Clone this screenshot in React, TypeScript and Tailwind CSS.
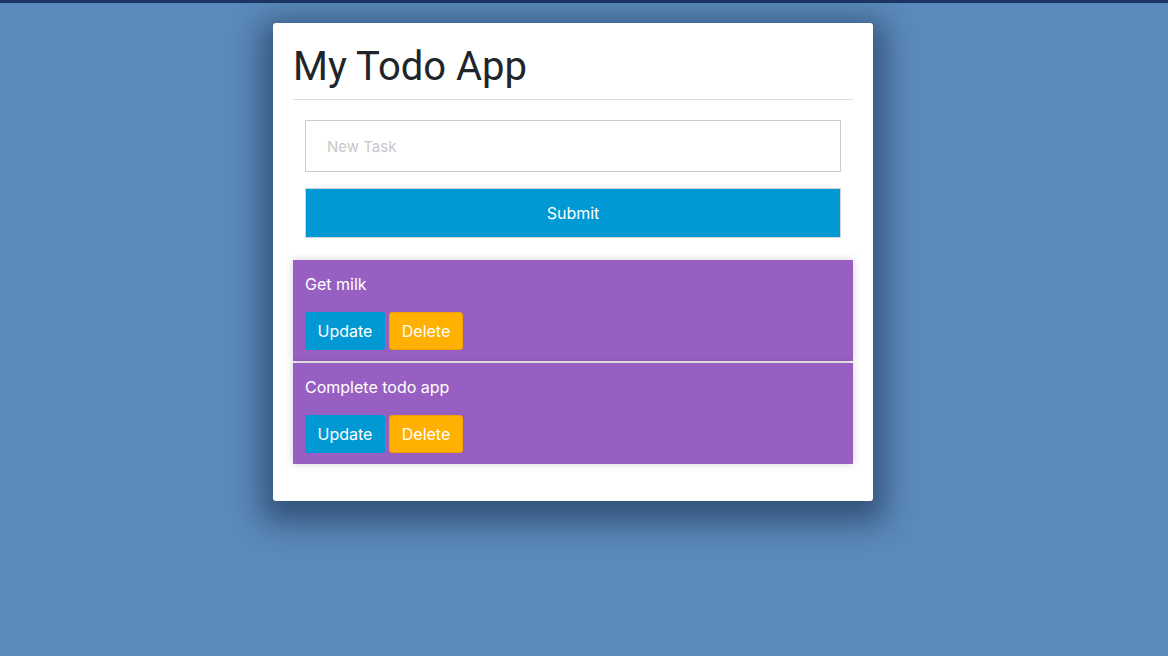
import { useState } from "react";

const initialTodos = ["Get milk", "Complete todo app"];

function TodoItem({ text }: { text: string }) {
  return (
    <li className="bg-[#975fc1] px-3 pt-[14px] pb-[11px] shadow-[0_0_8px_rgba(0,0,0,0.18)]">
      <p className="text-[16px] leading-[20px] text-white">{text}</p>
      <div className="mt-[18px] flex gap-1">
        <button className="h-[38px] w-[80px] rounded-[3px] bg-[#0099d3] text-[16px] text-white">
          Update
        </button>
        <button className="h-[38px] w-[74px] rounded-[3px] border border-[#f0a000] bg-[#ffb000] text-[16px] text-white">
          Delete
        </button>
      </div>
    </li>
  );
}

function App() {
  const [task, setTask] = useState("");

  return (
    <div className="min-h-screen border-t-[3px] border-[#1b3566] bg-[#5b8abb] pr-[22px] font-['Inter',sans-serif]">
      <div className="mx-auto mt-5 w-[600px] rounded-[3px] bg-white px-5 pt-[19px] pb-[37px] shadow-[0_10px_30px_12px_rgba(20,40,70,0.55)]">
        <h1 className="border-b border-[#dedede] pb-[7px] font-['Roboto',sans-serif] text-[40px] leading-[50px] text-[#212529]">
          My Todo App
        </h1>
        <form
          className="px-3 pt-5 pb-[22px]"
          onSubmit={(e) => e.preventDefault()}
        >
          <input
            value={task}
            onChange={(e) => setTask(e.target.value)}
            placeholder="New Task"
            className="block h-[52px] w-full border border-[#cccccc] px-[21px] text-[15px] text-gray-700 outline-none placeholder:text-[#c8c8c8]"
          />
          <button
            type="submit"
            className="mt-4 block h-[50px] w-full border border-[#d4d4d4] bg-[#0099d5] text-[16px] text-white"
          >
            Submit
          </button>
        </form>
        <ul className="flex flex-col gap-[2px]">
          {initialTodos.map((t) => (
            <TodoItem key={t} text={t} />
          ))}
        </ul>
      </div>
    </div>
  );
}

export default App;
